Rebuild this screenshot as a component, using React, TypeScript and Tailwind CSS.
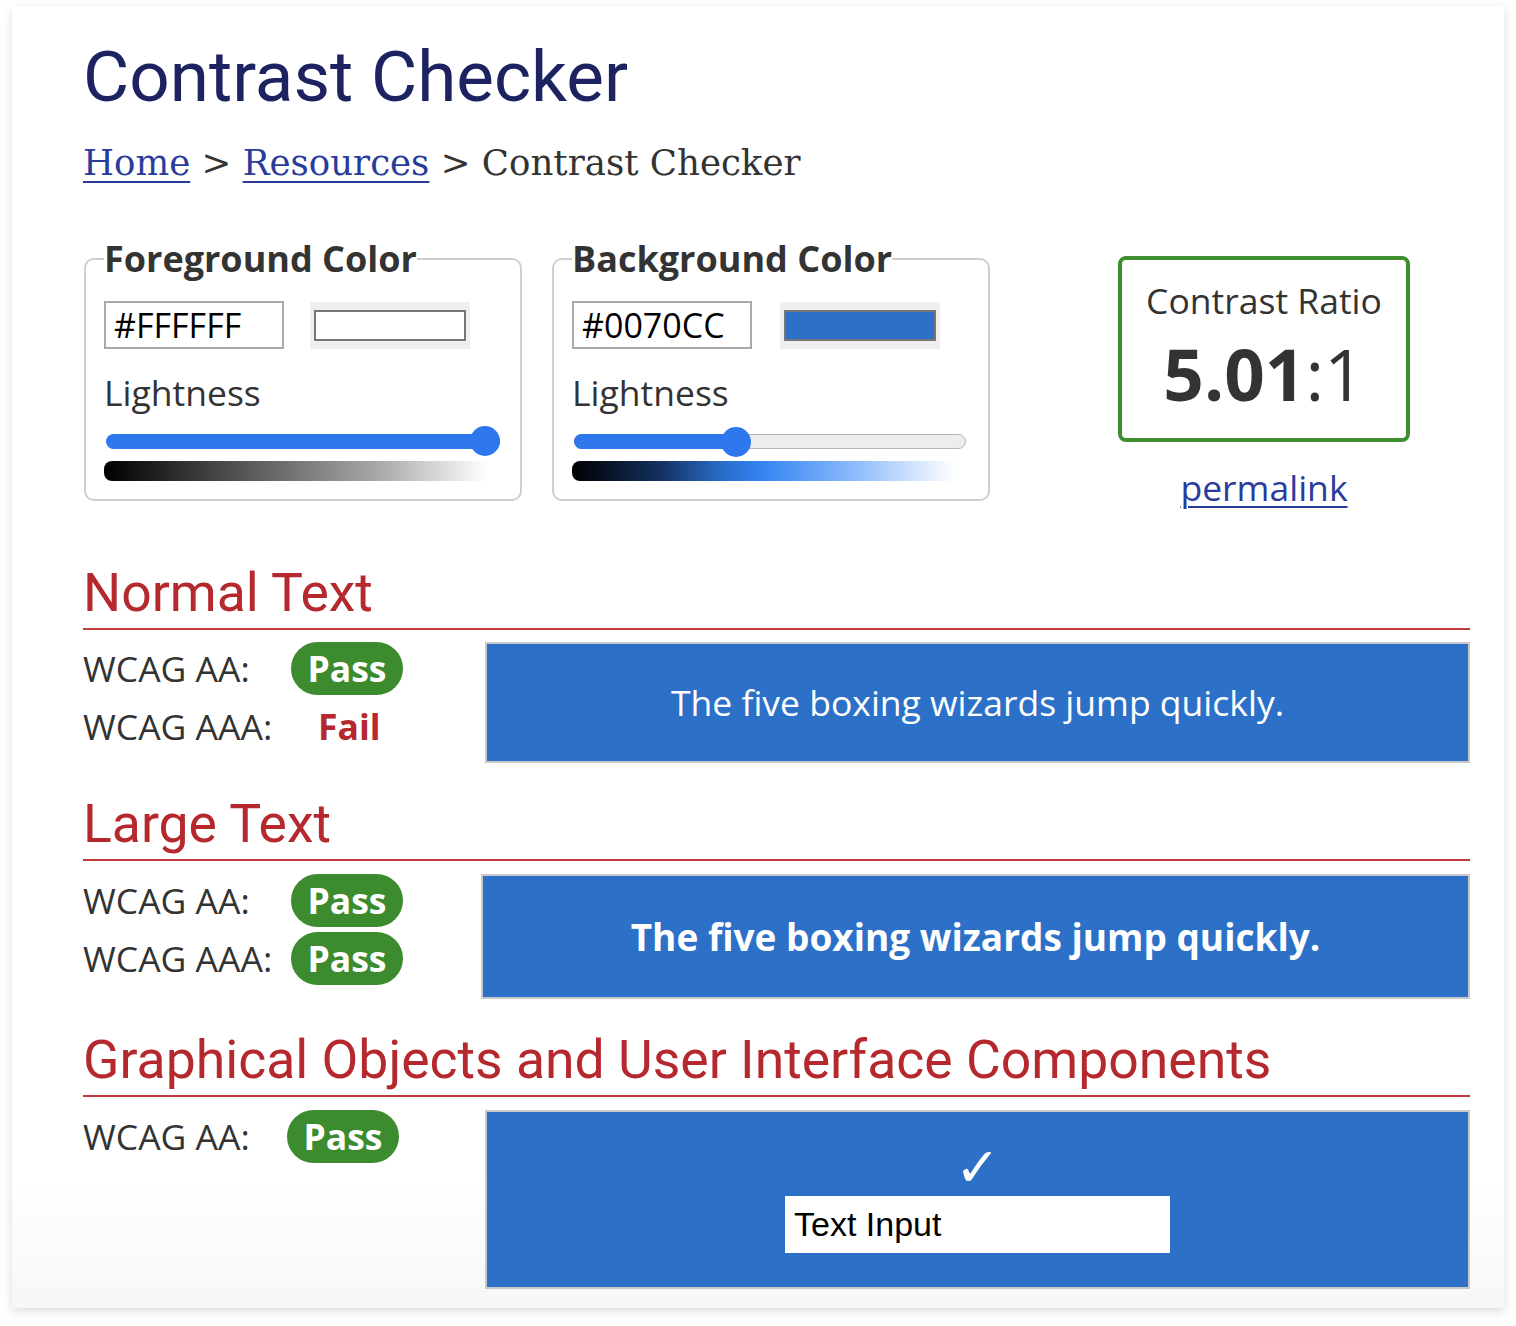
import React from 'react';

const Pass = () => (
  <span className="flex h-[53px] w-[112px] items-center justify-center rounded-full bg-[#3d8b2f] text-[35.5px] font-bold leading-none text-white">
    Pass
  </span>
);

const Label = ({ text, w }: { text: string; w: string }) => (
  <span className={`${w} text-[35.5px] leading-none text-[#333]`}>{text}</span>
);

const SectionHeading = ({ title, className }: { title: string; className: string }) => (
  <h2
    className={`border-b-2 border-[#c23a3c] pb-[9px] font-['Roboto',sans-serif] text-[53.5px] leading-[52px] text-[#b4282e] ${className}`}
  >
    {title}
  </h2>
);

const Swatch = ({ fill }: { fill: string }) => (
  <div className="flex h-[47px] w-[160px] items-center justify-center bg-[#efefef]">
    <div className={`h-[31px] w-[152px] border-2 border-[#767676] ${fill}`} />
  </div>
);

export default function App() {
  return (
    <div className="min-h-[1326px] bg-white pl-[12px] pt-[6px] font-['Open_Sans',sans-serif]">
      <div className="w-[1492px] h-[1302px] bg-white bg-[linear-gradient(to_bottom,#fff_90%,#f6f7f9)] pl-[71px] pr-[34px] pt-[35px] shadow-[0_3px_10px_rgba(0,0,0,0.14)]">
        <h1 className="font-['Roboto',sans-serif] text-[71px] leading-[71px] text-[#1c2360]">Contrast Checker</h1>

        <nav className="mt-[30px] font-['DejaVu_Serif',serif] text-[35.6px] leading-[42px] text-[#333]">
          <a href="#" className="text-[#2a3c9b] underline underline-offset-[6px] decoration-[2px]">Home</a>
          {' > '}
          <a href="#" className="text-[#2a3c9b] underline underline-offset-[6px] decoration-[2px]">Resources</a>
          {' > Contrast Checker'}
        </nav>

        <div className="mt-[50px] flex items-start">
          {/* foreground */}
          <fieldset className="ml-[1px] w-[437px] rounded-[10px] border-2 border-[#cfcfcf] px-[18px] pb-[18px] pt-[18px]">
            <legend className="text-[36px] font-bold leading-[normal] text-[#333]">Foreground Color</legend>
            <div className="flex items-center gap-[26px]">
              <div className="flex h-[48px] w-[180px] items-center border-2 border-[#a9a9a9] pl-[8px] text-[34px] leading-none text-black">#FFFFFF</div>
              <Swatch fill="bg-white" />
            </div>
            <div className="mt-[20px] text-[35.5px] leading-[46px] text-[#333]">Lightness</div>
            <div className="relative mx-[2px] mt-[19px] h-[15px] w-[394px] rounded-full bg-[#2f77ec]">
              <div className="absolute right-0 top-[-8px] h-[30px] w-[30px] rounded-full bg-[#2f77ec]" />
            </div>
            <div className="mt-[12px] h-[20px] w-[395px] rounded-l-[8px] bg-[linear-gradient(to_right,#000,#555_35%,#aaa_70%,#fff_97%)]" />
          </fieldset>

          {/* background */}
          <fieldset className="ml-[30px] w-[438px] rounded-[10px] border-2 border-[#cfcfcf] px-[18px] pb-[18px] pt-[18px]">
            <legend className="text-[36px] font-bold leading-[normal] text-[#333]">Background Color</legend>
            <div className="flex items-center gap-[28px]">
              <div className="flex h-[48px] w-[180px] items-center border-2 border-[#a9a9a9] pl-[8px] text-[34px] leading-none text-black">#0070CC</div>
              <Swatch fill="bg-[#2c71c7]" />
            </div>
            <div className="mt-[20px] text-[35.5px] leading-[46px] text-[#333]">Lightness</div>
            <div className="relative mx-[2px] mt-[19px] h-[15px] w-[392px] rounded-full border border-[#b5b5b5] bg-[#ededed]">
              <div className="absolute left-[-1px] top-[-1px] h-[15px] w-[165px] rounded-l-full bg-[#2f77ec]" />
              <div className="absolute left-[146px] top-[-8px] h-[30px] w-[30px] rounded-full bg-[#2f77ec]" />
            </div>
            <div className="mt-[12px] h-[20px] w-[395px] rounded-l-[8px] bg-[linear-gradient(to_right,#000,#13305e_22%,#2a6cc8_38%,#3384f2_48%,#8fbcfb_72%,#fff_97%)]" />
          </fieldset>

          {/* ratio */}
          <div className="ml-[128px] mt-[22px] flex flex-col items-center">
            <div className="flex h-[186px] w-[292px] flex-col items-center rounded-[8px] border-4 border-[#3e8e30] pt-[17px] text-[#333]">
              <div className="text-[35.5px] leading-[46px]">Contrast Ratio</div>
              <div className="mt-[15px] text-[71px] leading-[71px]">
                <strong className="font-bold">5.01</strong>:1
              </div>
            </div>
            <a href="#" className="mt-[22px] text-[35.5px] leading-[46px] text-[#2a3c9b] underline underline-offset-[5px] decoration-[2px]">permalink</a>
          </div>
        </div>

        {/* normal text */}
        <SectionHeading title="Normal Text" className="mt-[57px]" />
        <div className="mt-[12px] flex items-start">
          <div className="flex w-[402px] flex-col gap-[5px]">
            <div className="flex h-[53px] items-center">
              <Label text="WCAG AA:" w="w-[208px]" />
              <Pass />
            </div>
            <div className="flex h-[53px] items-center">
              <Label text="WCAG AAA:" w="w-[208px]" />
              <span className="ml-[27px] text-[35.5px] font-bold leading-none text-[#b4282e]">Fail</span>
            </div>
          </div>
          <div className="flex h-[121px] flex-1 items-center justify-center border-2 border-[#c9c9c9] bg-[#2c71c7] text-[35.5px] text-white">
            The five boxing wizards jump quickly.
          </div>
        </div>

        {/* large text */}
        <SectionHeading title="Large Text" className="mt-[35px]" />
        <div className="mt-[13px] flex items-start">
          <div className="flex w-[398px] flex-col gap-[5px]">
            <div className="flex h-[53px] items-center">
              <Label text="WCAG AA:" w="w-[208px]" />
              <Pass />
            </div>
            <div className="flex h-[53px] items-center">
              <Label text="WCAG AAA:" w="w-[208px]" />
              <Pass />
            </div>
          </div>
          <div className="flex h-[125px] flex-1 items-center justify-center border-2 border-[#c9c9c9] bg-[#2c71c7] text-[37px] font-bold text-white">
            The five boxing wizards jump quickly.
          </div>
        </div>

        {/* graphical */}
        <SectionHeading title="Graphical Objects and User Interface Components" className="mt-[35px]" />
        <div className="mt-[13px] flex items-start">
          <div className="flex w-[402px] flex-col">
            <div className="flex h-[53px] items-center">
              <Label text="WCAG AA:" w="w-[204px]" />
              <Pass />
            </div>
          </div>
          <div className="flex h-[179px] flex-1 flex-col items-center justify-center border-2 border-[#c9c9c9] bg-[#2c71c7]">
            <span className="font-['DejaVu_Sans',sans-serif] text-[54px] leading-[44px] text-white">✓</span>
            <div className="mt-[6px] flex h-[57px] w-[385px] items-center bg-white pl-[9px] font-['Liberation_Sans',sans-serif] text-[34px] text-black">
              Text Input
            </div>
          </div>
        </div>
      </div>
    </div>
  );
}
